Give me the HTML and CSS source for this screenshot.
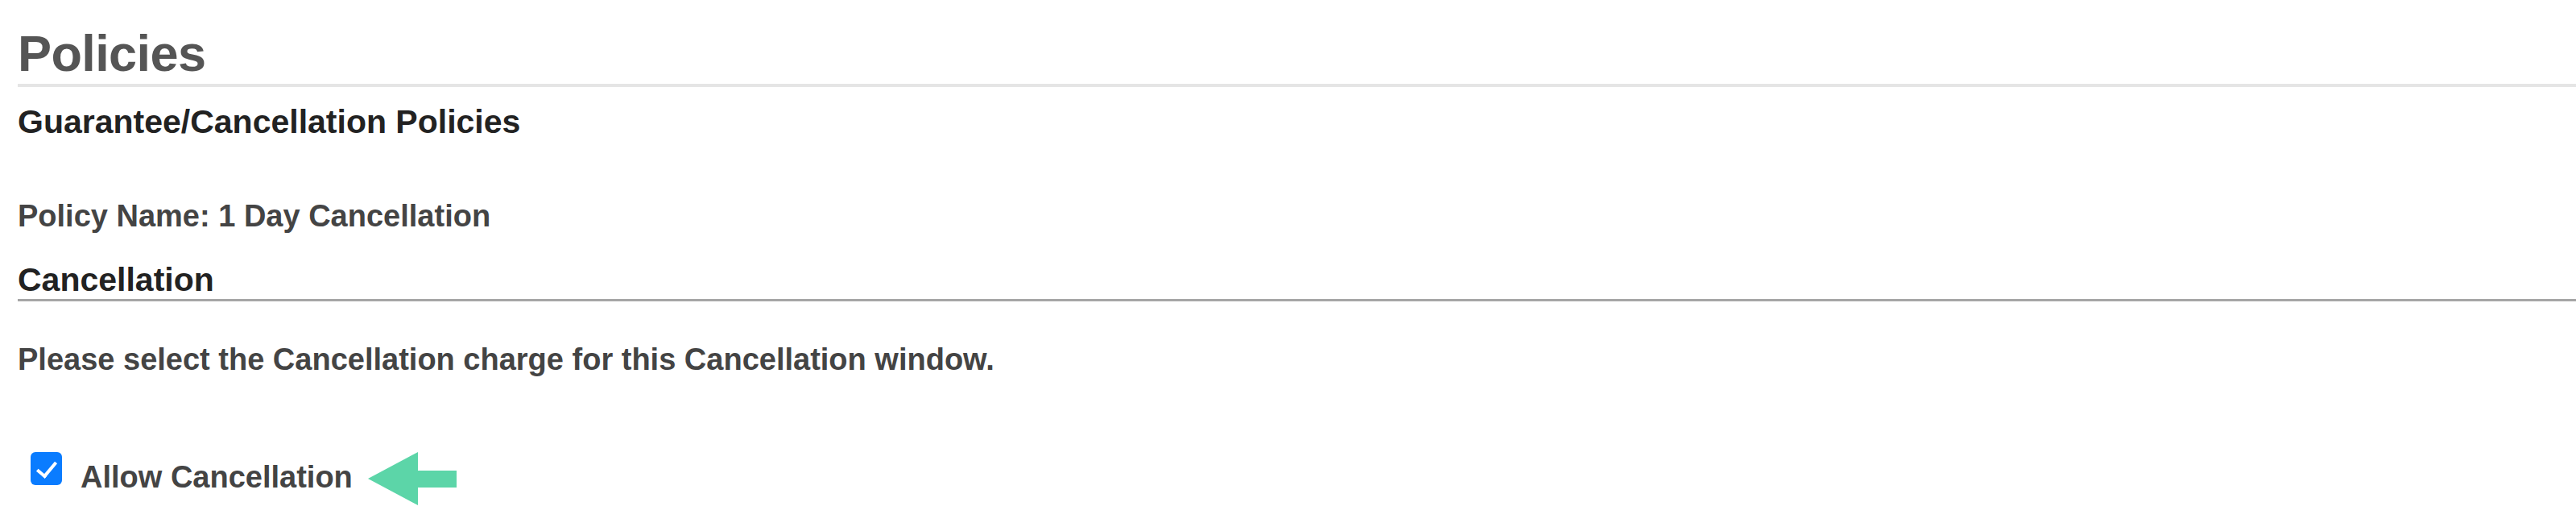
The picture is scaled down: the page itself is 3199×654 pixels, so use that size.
FILE: index.html
```html
<!DOCTYPE html>
<html lang="en">

<head>
    <meta charset="UTF-8">
    <meta name="viewport" content="width=device-width, initial-scale=1.0">
    <title>Policies</title>
    <link rel="stylesheet" href="styles.css">
</head>

<body>
    <div class="page">
        <h1 class="title">Policies</h1>
        <h2 class="section">Guarantee/Cancellation Policies</h2>
        <p class="policy-name">Policy Name: 1 Day Cancellation</p>
        <h3 class="sub">Cancellation</h3>
        <p class="hint">Please select the Cancellation charge for this Cancellation window.</p>
        <div class="allow-row">
            <label class="check">
                <input type="checkbox" checked>
                <span class="check-text">Allow Cancellation</span>
            </label>
            <svg class="pointer" width="110" height="66" viewBox="0 0 110 66">
                <polygon points="0,33 62,0 62,23 110,23 110,44 62,44 62,66" fill="#5cd5a8" />
            </svg>
        </div>
    </div>
</body>

</html>
```

FILE: styles.css
```css
/* reset start */
* {
    padding: 0;
    margin: 0;
    box-sizing: border-box;
}

html,
body {
    width: 100%;
    height: 100%;
    background-color: #fff;
}

body {
    overflow: hidden;
    font-family: "Liberation Sans", Arial, sans-serif;
    font-weight: bold;
}

/* reset end */
.page {
    padding: 35px 0 0 22px;
}

.title {
    font-size: 63px;
    line-height: 63px;
    letter-spacing: -0.6px;
    color: #555;
    padding-bottom: 6px;
    border-bottom: 4px solid #e5e5e5;
}

.section,
.sub {
    font-size: 41px;
    line-height: 41px;
    color: #222;
}

.section {
    margin-top: 23px;
}

.policy-name,
.hint,
.check-text {
    font-size: 38px;
    line-height: 38px;
    color: #444;
}

.policy-name {
    margin-top: 77px;
}

.sub {
    margin-top: 40px;
    padding-bottom: 3px;
    border-bottom: 3px solid #a6a6a6;
}

.hint {
    margin-top: 53px;
}

.allow-row {
    margin-top: 96px;
    padding-left: 16px;
    display: flex;
    align-items: flex-start;
    gap: 19px;
}

.check {
    display: flex;
    align-items: flex-start;
    gap: 23px;
}

.check input {
    appearance: none;
    -webkit-appearance: none;
    position: relative;
    width: 39px;
    height: 41px;
    border-radius: 6px;
    background-color: #0a7cff;
}

.check input::after {
    content: "";
    position: absolute;
    left: 13px;
    top: 7px;
    width: 10px;
    height: 20px;
    border: solid #fff;
    border-width: 0 4px 4px 0;
    transform: rotate(40deg);
}

.check-text {
    padding-top: 12px;
}
```
